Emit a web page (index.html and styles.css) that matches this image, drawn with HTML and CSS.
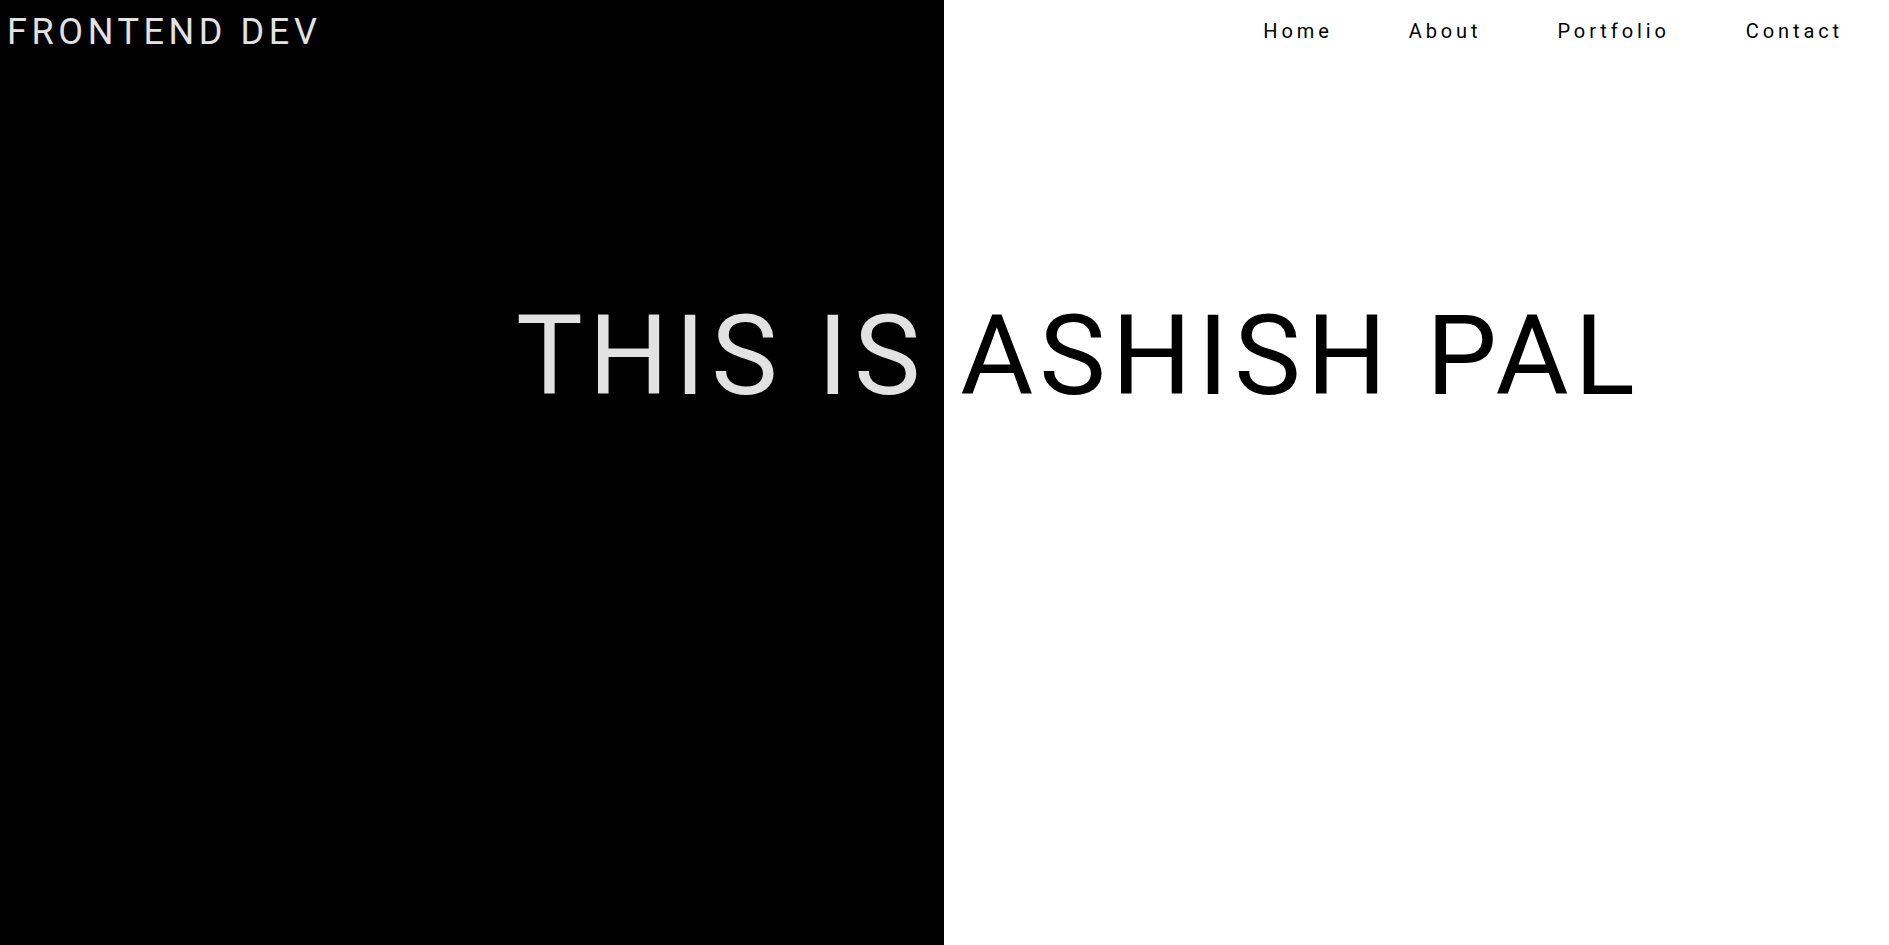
FILE: index.html
```html
<!DOCTYPE html>
<html lang="en">
<head>
<meta charset="utf-8">
<title>Frontend Dev</title>
<link rel="stylesheet" href="styles.css">
</head>
<body>
<div class="page">
  <header class="header">
    <div class="logo">FRONTEND DEV</div>
    <nav class="nav">
      <a class="nav-link" href="#">Home</a>
      <a class="nav-link" href="#">About</a>
      <a class="nav-link" href="#">Portfolio</a>
      <a class="nav-link" href="#">Contact</a>
    </nav>
  </header>
  <main class="hero">
    <h1 class="hero-title">THIS IS ASHISH PAL</h1>
  </main>
</div>
</body>
</html>
```
FILE: styles.css
```css
html, body {
  margin: 0;
  padding: 0;
}
body {
  font-family: Roboto, "Liberation Sans", sans-serif;
  background: linear-gradient(to right, #000 0, #000 50%, #fff 50%, #fff 100%);
  min-height: 100vh;
  overflow: hidden;
}
.page {
  display: flex;
  flex-direction: column;
  height: 100vh;
}
.header {
  display: flex;
  justify-content: space-between;
  align-items: flex-start;
  padding: 10px 0 0 7px;
}
.logo {
  font-size: 36px;
  line-height: 44px;
  letter-spacing: 4.6px;
  color: #e2e2e2;
  font-weight: 400;
}
.nav {
  display: flex;
  gap: 76px;
  padding: 9px 46px 0 0;
}
.nav-link {
  font-size: 20px;
  line-height: 24px;
  letter-spacing: 3.9px;
  color: #000;
  text-decoration: none;
}
.hero {
  padding-top: 236px;
}
.hero-title {
  margin: 0;
  padding-left: 516px;
  font-size: 112px;
  font-weight: 400;
  line-height: normal;
  letter-spacing: 6px;
  background: linear-gradient(to right, #e2e2e2 0, #e2e2e2 50%, #000 50%, #000 100%);
  -webkit-background-clip: text;
  background-clip: text;
  color: transparent;
}
```
